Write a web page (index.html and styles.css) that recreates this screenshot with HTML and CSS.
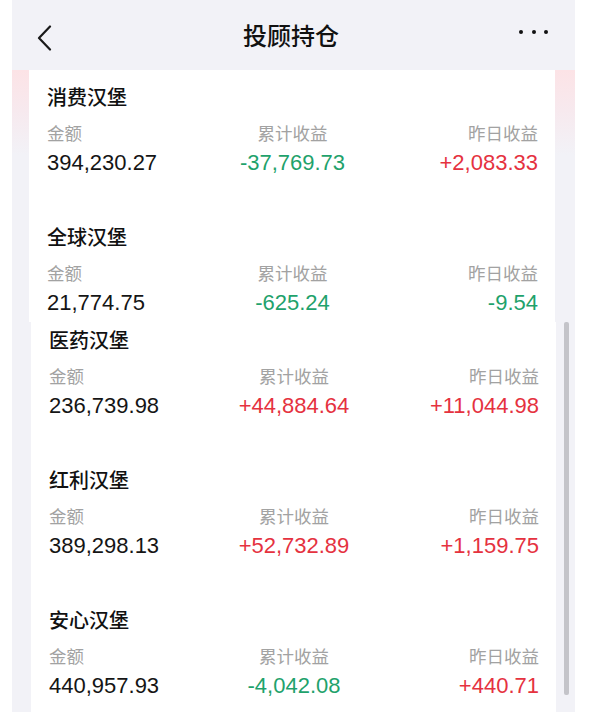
FILE: index.html
```html
<!DOCTYPE html>
<html lang="zh-CN">
<head>
    <meta charset="UTF-8">
    <meta name="viewport" content="width=device-width, initial-scale=1.0">
    <title>投顾持仓</title>
    <link rel="stylesheet" href="styles.css">
</head>
<body>
    <div class="screen">
        <!-- Top navigation -->
        <div class="topbar">
            <svg class="back-icon" width="16" height="26" viewBox="0 0 16 26">
                <path d="M13 1.5 L2 13 L13 24.5" fill="none" stroke="#1a1a1a" stroke-width="2.2" stroke-linecap="round" stroke-linejoin="round"/>
            </svg>
            <h1 class="title">投顾持仓</h1>
            <div class="more">
                <span class="dot"></span><span class="dot"></span><span class="dot"></span>
            </div>
        </div>

        <!-- First screen -->
        <div class="section upper">
            <div class="card">
                <div class="holding">
                    <div class="name">消费汉堡</div>
                    <div class="row labels">
                        <span>金额</span><span>累计收益</span><span>昨日收益</span>
                    </div>
                    <div class="row values">
                        <span>394,230.27</span><span class="down">-37,769.73</span><span class="up">+2,083.33</span>
                    </div>
                </div>
                <div class="holding">
                    <div class="name">全球汉堡</div>
                    <div class="row labels">
                        <span>金额</span><span>累计收益</span><span>昨日收益</span>
                    </div>
                    <div class="row values">
                        <span>21,774.75</span><span class="down">-625.24</span><span class="down">-9.54</span>
                    </div>
                </div>
            </div>
        </div>

        <!-- Second screen (scrolled) -->
        <div class="section lower">
            <div class="card">
                <div class="holding">
                    <div class="name">医药汉堡</div>
                    <div class="row labels">
                        <span>金额</span><span>累计收益</span><span>昨日收益</span>
                    </div>
                    <div class="row values">
                        <span>236,739.98</span><span class="up">+44,884.64</span><span class="up">+11,044.98</span>
                    </div>
                </div>
                <div class="holding">
                    <div class="name">红利汉堡</div>
                    <div class="row labels">
                        <span>金额</span><span>累计收益</span><span>昨日收益</span>
                    </div>
                    <div class="row values">
                        <span>389,298.13</span><span class="up">+52,732.89</span><span class="up">+1,159.75</span>
                    </div>
                </div>
                <div class="holding">
                    <div class="name">安心汉堡</div>
                    <div class="row labels">
                        <span>金额</span><span>累计收益</span><span>昨日收益</span>
                    </div>
                    <div class="row values">
                        <span>440,957.93</span><span class="down">-4,042.08</span><span class="up">+440.71</span>
                    </div>
                </div>
            </div>
            <div class="scroll-track">
                <div class="scroll-thumb"></div>
            </div>
        </div>
    </div>
</body>
</html>
```

FILE: styles.css
```css
/* Global Styles */
body {
    margin: 0;
    background-color: #ffffff;
    font-family: "Liberation Sans", "Noto Sans CJK SC", sans-serif;
    color: #111;
}

.screen {
    margin-left: 12px;
    width: 563px;
    height: 712px;
    overflow: hidden;
    background-color: #f2f2f7;
}

/* Top bar */
.topbar {
    height: 70px;
    display: flex;
    align-items: center;
    justify-content: space-between;
    padding: 0 27px 0 25px;
    background-color: #f2f2f7;
}

.back-icon {
    margin-top: 6px;
    width: 16px;
}

.title {
    margin: 0 0 2px 10px;
    font-family: "Noto Sans CJK SC", sans-serif;
    font-size: 24px;
    font-weight: 500;
    color: #111;
}

.more {
    display: flex;
    gap: 8.5px;
    margin-bottom: 6px;
}

.dot {
    width: 4px;
    height: 4px;
    border-radius: 50%;
    background-color: #111;
}

/* Sections */
.section {
    display: flex;
}

.upper {
    height: 252px;
    padding: 0 20px 0 17px;
    background: linear-gradient(180deg, #fce3e6 0px, #f7e9ee 40px, #f2f2f7 85px);
}

.lower {
    height: 390px;
    padding-left: 19px;
}

.card {
    flex: 1;
    background-color: #ffffff;
    padding: 0 17px 0 18px;
}

.upper .card {
    padding-top: 13px;
}

.lower .card {
    padding-top: 4px;
}

.holding {
    margin-bottom: 45px;
}

.name {
    font-family: "Noto Sans CJK SC", sans-serif;
    font-size: 20px;
    font-weight: 500;
    line-height: 28px;
}

.row {
    display: grid;
    grid-template-columns: 1fr 1fr 1fr;
}

.row span:nth-child(2) {
    text-align: center;
}

.row span:nth-child(3) {
    text-align: right;
}

.labels {
    margin-top: 10px;
    font-family: "Noto Sans CJK SC", sans-serif;
    font-size: 17.5px;
    line-height: 24px;
    color: #a2a2a2;
}

.values {
    margin-top: 3px;
    font-size: 22px;
    line-height: 30px;
    color: #151515;
}

.up {
    color: #e5323f;
}

.down {
    color: #1fa26c;
}

/* Scrollbar of the scrolled screen */
.scroll-track {
    width: 18px;
    display: flex;
    justify-content: center;
    padding-left: 1px;
}

.scroll-thumb {
    width: 5px;
    height: 373px;
    background-color: #c4c4c9;
    border-radius: 2px;
}
```
